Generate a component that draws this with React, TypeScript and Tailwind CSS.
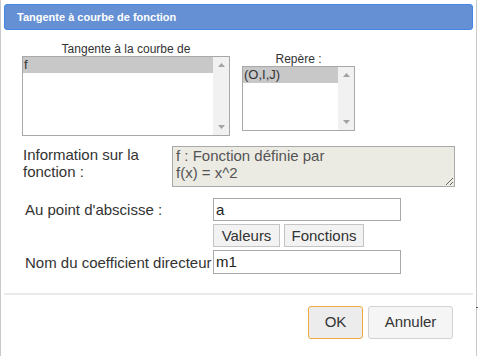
import React from "react";

function Arrow({ up }: { up?: boolean }) {
  return (
    <svg width="7" height="4" viewBox="0 0 7 4">
      {up ? <polygon points="0,4 7,4 3.5,0" fill="#a3a3a3" /> : <polygon points="0,0 7,0 3.5,4" fill="#a3a3a3" />}
    </svg>
  );
}

function Listbox({ cls, item }: { cls: string; item: string }) {
  return (
    <div className={`flex border border-[#a8a8a8] bg-white ${cls}`}>
      <div className="flex-1">
        <div className="h-[16px] bg-[#c8c8c8] text-[13px] leading-[16px] pl-[1px] text-[#333]">{item}</div>
      </div>
      <div className="w-[16px] bg-[#f1f1f1] flex flex-col justify-between items-center py-[6px]">
        <Arrow up />
        <Arrow />
      </div>
    </div>
  );
}

export default function App() {
  return (
    <div className="w-[478px] h-[356px] bg-white overflow-hidden font-['Liberation_Sans',Arial,sans-serif] text-[#333]">
      <div className="relative h-[356px] w-[477px] border-x border-[#c9c9c9] flex flex-col">
        <div className="ml-[3px] mt-[4px] w-[469px] h-[26px] rounded-[3px] border border-[#4485ea] bg-[#6590d3] flex items-center pl-[12px] text-white font-bold text-[11px]">
          Tangente à courbe de fonction
        </div>

        <div className="flex mt-[12px] ml-[21px]">
          <div className="w-[208px] flex flex-col items-center">
            <div className="text-[12px] leading-[14px]">Tangente à la courbe de</div>
            <Listbox cls="w-[208px] h-[80px]" item="f" />
          </div>
          <div className="ml-[12px] mt-[10px] w-[113px] flex flex-col items-center">
            <div className="text-[12px] leading-[14px]">Repère :</div>
            <Listbox cls="w-[113px] h-[65px]" item="(O,I,J)" />
          </div>
        </div>

        <div className="flex mt-[10px] ml-[22px]">
          <div className="w-[149px] text-[15px] leading-[17px]">Information sur la fonction :</div>
          <textarea
            readOnly
            value={"f : Fonction définie par\nf(x) = x^2"}
            className="w-[283px] h-[41px] border border-[#a9a9a9] bg-[#ebebe4] text-[15px] leading-[17px] px-[3px] py-0 text-[#545454] outline-none font-['Liberation_Sans',Arial,sans-serif]"
          />
        </div>

        <div className="flex items-center mt-[11px] ml-[24px]">
          <div className="w-[188px] text-[15px] leading-[17px]">Au point d'abscisse :</div>
          <div className="w-[188px] h-[23px] border border-[#a9a9a9] text-[15px] leading-[21px] pl-[2px] text-[#222]">a</div>
        </div>

        <div className="flex mt-[3px] ml-[212px] gap-[4px]">
          <div className="w-[67px] h-[23px] border border-[#c4c4c4] bg-[#f2f2f2] text-[15px] leading-[21px] flex justify-center text-[#333]">Valeurs</div>
          <div className="w-[80px] h-[23px] border border-[#c4c4c4] bg-[#f2f2f2] text-[15px] leading-[21px] flex justify-center text-[#333]">Fonctions</div>
        </div>

        <div className="flex items-center mt-[3px] ml-[24px]">
          <div className="w-[188px] text-[15px] leading-[17px] whitespace-nowrap">Nom du coefficient directeur</div>
          <div className="w-[188px] h-[24px] border border-[#a9a9a9] text-[15px] leading-[22px] pl-[2px] text-[#222]">m1</div>
        </div>

        <div className="mt-[19px] ml-[3px] w-[469px] h-[2px] bg-[#ebebeb]" />

        <div className="flex mt-[11px] ml-[307px] gap-[5px]">
          <div className="w-[55px] h-[33px] rounded-[3px] border border-[#f0aa3c] bg-[#ececec] text-[15px] flex items-center justify-center text-[#333]">OK</div>
          <div className="w-[85px] h-[33px] rounded-[3px] border border-[#d2d2d2] bg-[#f5f5f5] text-[15px] flex items-center justify-center text-[#333]">Annuler</div>
        </div>

        <div className="absolute left-[475px] top-[307px] w-[2px] h-[1px] bg-[#555]" />
      </div>
    </div>
  );
}
